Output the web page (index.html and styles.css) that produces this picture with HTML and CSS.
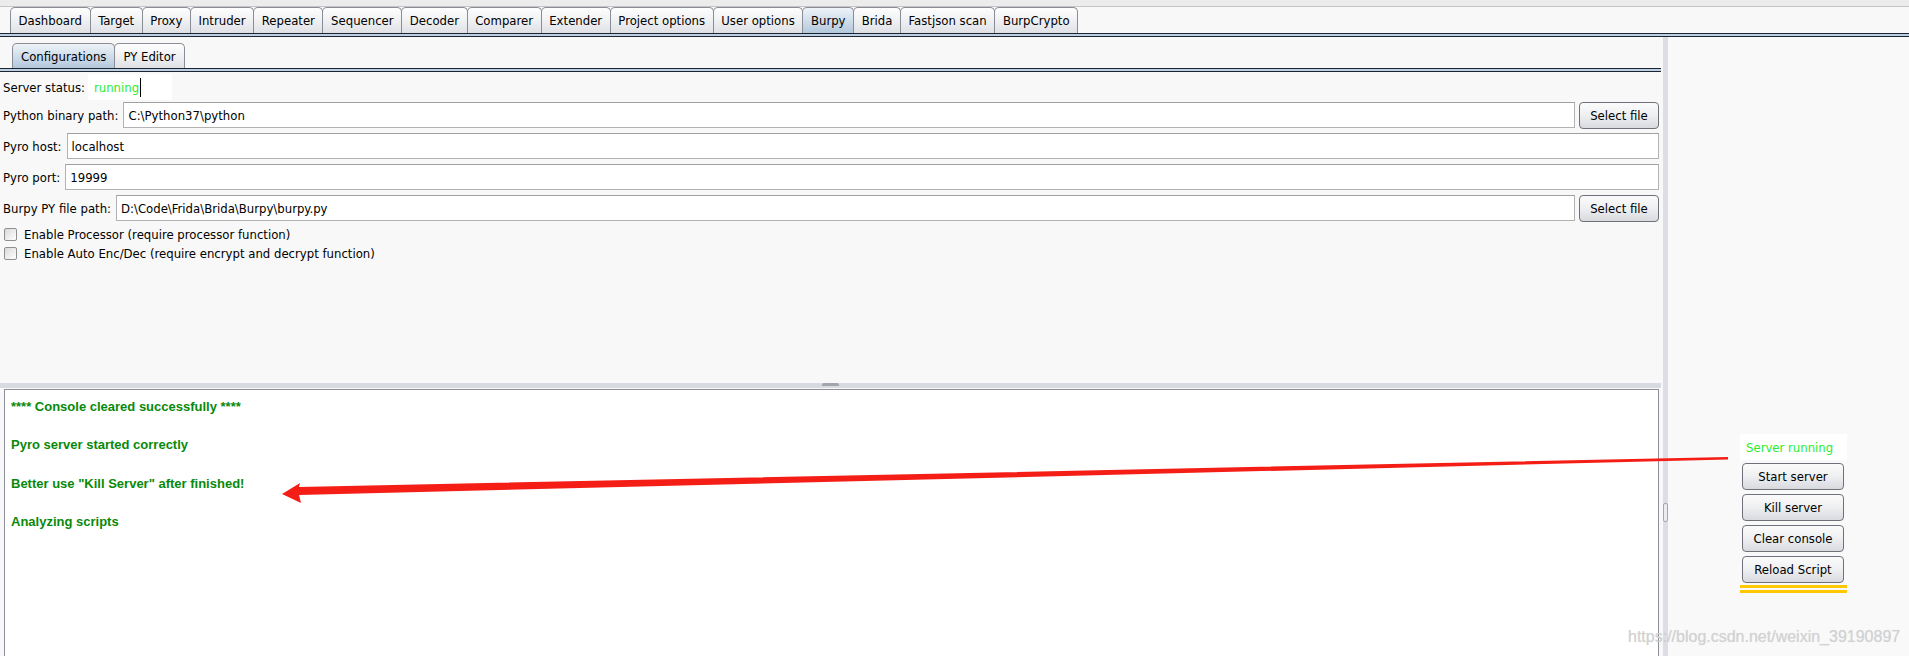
FILE: index.html
```html
<!DOCTYPE html>
<html lang="en">
<head>
  <meta charset="UTF-8" />
  <title>Burp Suite - Burpy</title>
  <link rel="stylesheet" href="styles.css">
</head>
<body>

  <div class="top-strip"></div>

  <nav class="tabs main-tabs">
    <span class="tab">Dashboard</span>
    <span class="tab">Target</span>
    <span class="tab">Proxy</span>
    <span class="tab">Intruder</span>
    <span class="tab">Repeater</span>
    <span class="tab">Sequencer</span>
    <span class="tab">Decoder</span>
    <span class="tab">Comparer</span>
    <span class="tab">Extender</span>
    <span class="tab">Project options</span>
    <span class="tab">User options</span>
    <span class="tab active">Burpy</span>
    <span class="tab">Brida</span>
    <span class="tab">Fastjson scan</span>
    <span class="tab">BurpCrypto</span>
  </nav>
  <div class="tab-rule"></div>

  <div class="workspace">
    <section class="burpy-panel">
      <nav class="tabs sub-tabs">
        <span class="tab active">Configurations</span>
        <span class="tab">PY Editor</span>
      </nav>
      <div class="tab-rule"></div>

      <div class="config">
        <div class="row status-row">
          <label>Server status:</label>
          <span class="status-box"><span class="status-text">running</span><span class="caret"></span></span>
        </div>
        <div class="row python-row">
          <label>Python binary path:</label>
          <input class="field" type="text" value="C:\Python37\python" />
          <button class="btn select-btn">Select file</button>
        </div>
        <div class="row">
          <label>Pyro host:</label>
          <input class="field" type="text" value="localhost" />
        </div>
        <div class="row">
          <label>Pyro port:</label>
          <input class="field" type="text" value="19999" />
        </div>
        <div class="row">
          <label>Burpy PY file path:</label>
          <input class="field" type="text" value="D:\Code\Frida\Brida\Burpy\burpy.py" />
          <button class="btn select-btn">Select file</button>
        </div>
        <div class="check-row first">
          <span class="checkbox"></span>
          <span>Enable Processor (require processor function)</span>
        </div>
        <div class="check-row">
          <span class="checkbox"></span>
          <span>Enable Auto Enc/Dec (require encrypt and decrypt function)</span>
        </div>
      </div>

      <div class="splitter"><span class="grip"></span></div>

      <div class="console">
        <p>**** Console cleared successfully ****</p>
        <p>Pyro server started correctly</p>
        <p>Better use "Kill Server" after finished!</p>
        <p>Analyzing scripts</p>
      </div>
    </section>

    <div class="divider"><span class="grip-v"></span></div>

    <aside class="controls">
      <div class="server-label">Server running</div>
      <button class="btn side-btn first">Start server</button>
      <button class="btn side-btn">Kill server</button>
      <button class="btn side-btn">Clear console</button>
      <button class="btn side-btn">Reload Script</button>
      <div class="highlight"></div>
    </aside>
  </div>

  <!-- red annotation arrow -->
  <svg class="arrow" width="1909" height="656" viewBox="0 0 1909 656">
    <polygon points="1728,457 299,487 300,483 282,494 301,503 299,495 1728,459.5" fill="#f41e16" />
  </svg>

  <div class="watermark">https://blog.csdn.net/weixin_39190897</div>

</body>
</html>
```

FILE: styles.css
```css
* {
  box-sizing: border-box;
}

body {
  margin: 0;
  width: 1909px;
  height: 656px;
  overflow: hidden;
  position: relative;
  background: #f8f8f8;
  font-family: "DejaVu Sans Condensed", "Liberation Sans", sans-serif;
  font-size: 13px;
  color: #000;
}

.top-strip {
  height: 7px;
  background: #ececec;
  border-bottom: 1px solid #c4c4c4;
}

/* TABS */
.tabs {
  display: flex;
  align-items: flex-end;
}

.main-tabs {
  height: 26px;
  padding-left: 10px;
}

.sub-tabs {
  height: 25px;
  margin-top: 6px;
  padding-left: 12px;
}

.tab {
  height: 100%;
  display: flex;
  align-items: center;
  padding: 0 7.6px;
  margin-right: -1px;
  border: 1px solid #8a8d95;
  border-bottom: none;
  border-radius: 5px 5px 0 0;
  background: linear-gradient(#fefefe, #f1f2f4 45%, #dfe1e5);
  white-space: nowrap;
}

.tab.active {
  background: linear-gradient(#eef3f8, #d3e0ec 45%, #b3c8dc);
}

.sub-tabs .tab {
  padding: 0 8px;
}

.tab-rule {
  height: 4px;
  border-top: 1px solid #1f2530;
  border-bottom: 1px solid #1f2530;
  background: #bcd0e3;
}

/* LAYOUT */
.workspace {
  display: flex;
  height: 619px;
}

.burpy-panel {
  width: 1661px;
  display: flex;
  flex-direction: column;
}

.config {
  height: 311px;
  padding: 2px 2px 0 3px;
}

.row {
  display: flex;
  align-items: center;
  gap: 5px;
  height: 26px;
  margin-top: 5px;
}

.status-row {
  margin-top: 0;
  gap: 3px;
}

.python-row {
  margin-top: 2px;
}

.row label {
  white-space: nowrap;
}

.status-box {
  width: 84px;
  height: 26px;
  background: #ffffff;
  display: flex;
  align-items: center;
  padding-left: 6px;
}

.status-text {
  color: #2cec2c;
}

.caret {
  width: 1px;
  height: 19px;
  margin-left: 1px;
  background: #000;
}

.field {
  flex: 1;
  height: 26px;
  padding: 0 4px;
  border: 1px solid #b2b2b2;
  border-top-color: #a0a0a0;
  background: #ffffff;
  font: inherit;
  color: #000;
  outline: none;
}

.btn {
  font: inherit;
  color: #000;
  border: 1px solid #6f7178;
  border-radius: 4px;
  background: linear-gradient(#fbfbfb, #eeeff1 50%, #d9dadf);
  padding: 0;
  cursor: pointer;
}

.select-btn {
  width: 80px;
  height: 27px;
  margin-left: -1px;
}

.check-row {
  display: flex;
  align-items: center;
  gap: 7px;
  height: 18px;
  margin-top: 1px;
  padding-left: 1px;
}

.check-row.first {
  margin-top: 4px;
}

.checkbox {
  width: 13px;
  height: 13px;
  border: 1px solid #8e8f91;
  border-radius: 2px;
  background: linear-gradient(135deg, #d8d9db, #f4f4f4 70%, #ffffff);
}

/* SPLITTER + CONSOLE */
.splitter {
  height: 6px;
  background: #d7dae1;
  border-bottom: 1px solid #f8f8f8;
  display: flex;
  justify-content: center;
}

.grip {
  width: 17px;
  height: 3px;
  background: #a2a5ad;
  border-radius: 2px 2px 0 0;
}

.console {
  flex: 1;
  margin: 0 2px 0 4px;
  border: 1px solid #8d8f9a;
  border-bottom: none;
  background: #ffffff;
  padding: 7px 6px;
  color: #08890a;
  font-family: "Liberation Sans", Arial, sans-serif;
  font-weight: bold;
  font-size: 13px;
}

.console p {
  margin: 0 0 19.2px;
  line-height: 19.2px;
}

/* RIGHT SIDE */
.divider {
  width: 5px;
  margin-left: 2px;
  background: #dcdee4;
  padding-top: 466px;
}

.grip-v {
  display: block;
  height: 19px;
  border: 1px solid #a4a6ad;
  border-radius: 2px;
  background: #ebecef;
}

.controls {
  flex: 1;
  display: flex;
  flex-direction: column;
  align-items: flex-start;
  padding: 397px 0 0 72px;
  background: #f9f9fa;
}

.server-label {
  width: 107px;
  height: 26px;
  background: #ffffff;
  color: #2cec2c;
  display: flex;
  align-items: center;
  padding-left: 6px;
}

.side-btn {
  width: 102px;
  height: 27px;
  margin: 4px 0 0 2px;
}

.side-btn.first {
  margin-top: 3px;
}

.highlight {
  width: 107px;
  height: 8px;
  margin-top: 2px;
  border-top: 3px solid #ffc800;
  border-bottom: 3px solid #ffc800;
}

/* OVERLAYS */
.arrow {
  position: absolute;
  left: 0;
  top: 0;
  pointer-events: none;
}

.watermark {
  position: absolute;
  left: 1628px;
  top: 628px;
  font-family: "Liberation Sans", Arial, sans-serif;
  font-size: 16px;
  line-height: 18px;
  color: #d2d2d2;
  text-shadow: 0 0 1px rgba(0, 0, 0, 0.12);
  pointer-events: none;
}
```
